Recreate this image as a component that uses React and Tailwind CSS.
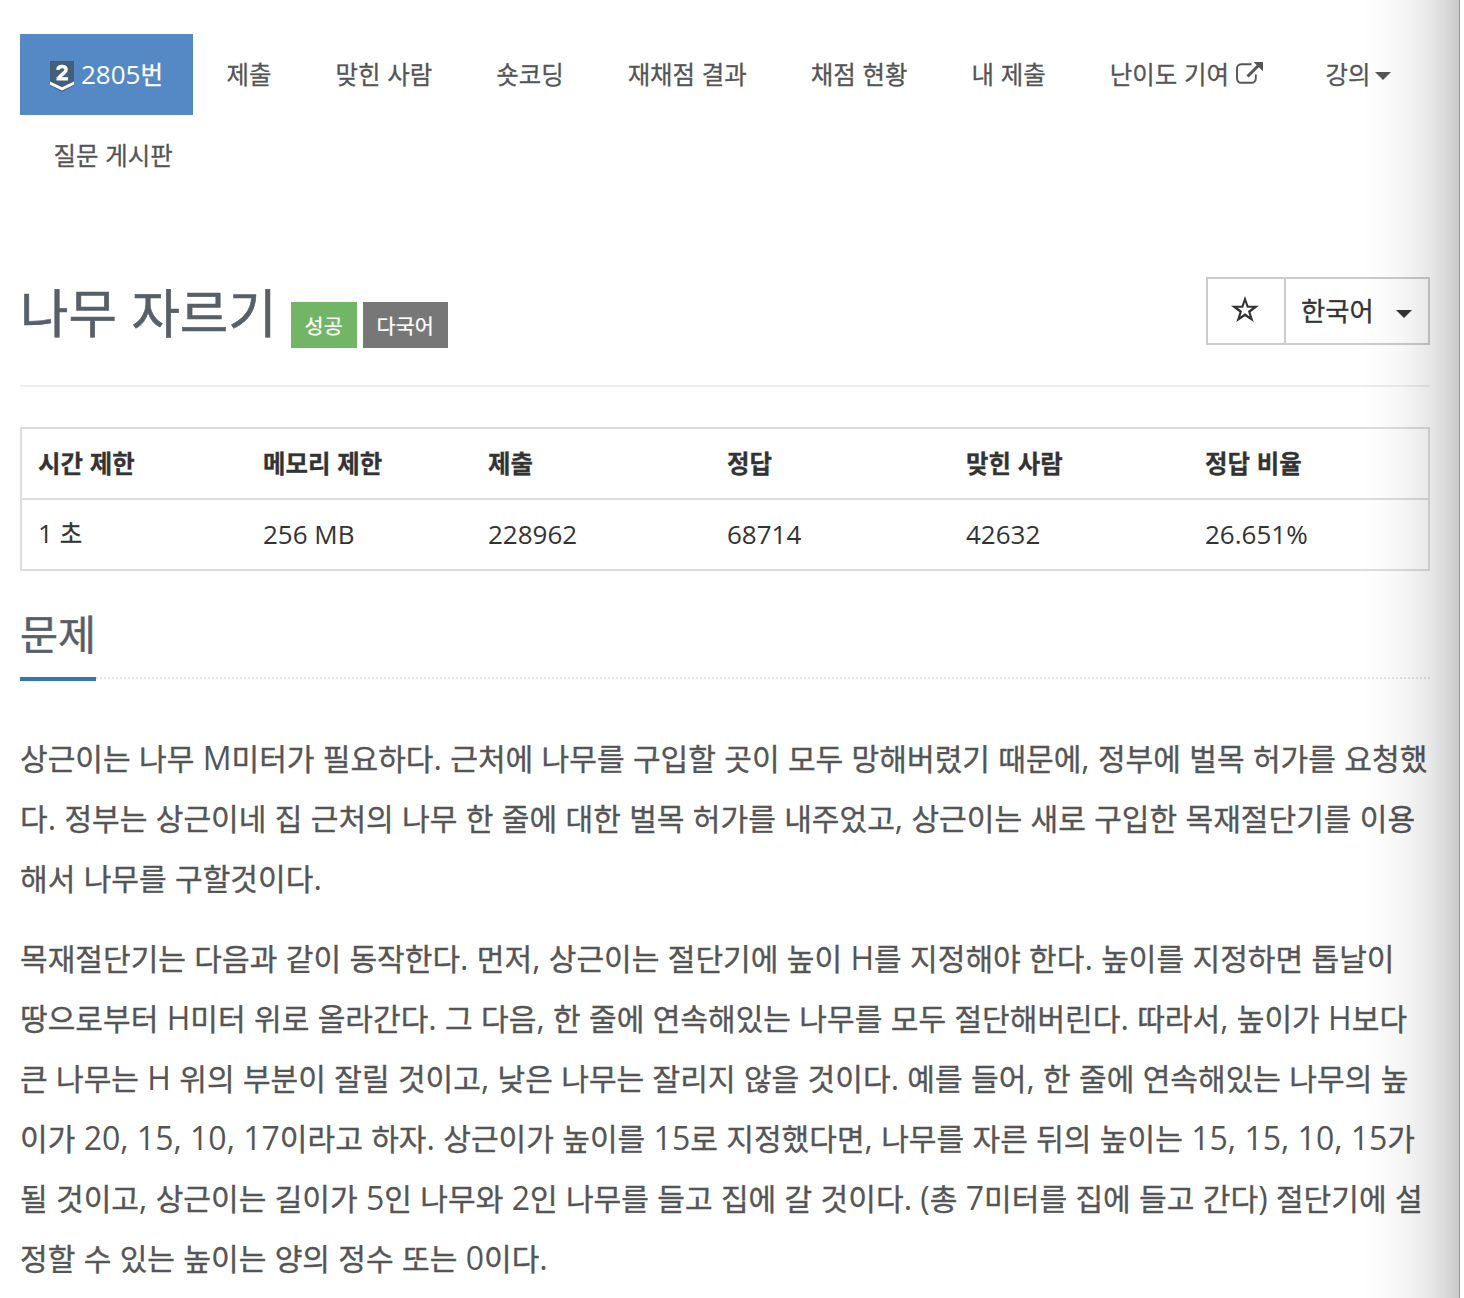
import React from 'react';

const tabs = ['제출', '맞힌 사람', '숏코딩', '재채점 결과', '채점 현황', '내 제출'];

const stats = [
  { label: '시간 제한', value: '1 초' },
  { label: '메모리 제한', value: '256 MB' },
  { label: '제출', value: '228962' },
  { label: '정답', value: '68714' },
  { label: '맞힌 사람', value: '42632' },
  { label: '정답 비율', value: '26.651%' },
];

const paragraphs = [
  [
    '상근이는 나무 M미터가 필요하다. 근처에 나무를 구입할 곳이 모두 망해버렸기 때문에, 정부에 벌목 허가를 요청했',
    '다. 정부는 상근이네 집 근처의 나무 한 줄에 대한 벌목 허가를 내주었고, 상근이는 새로 구입한 목재절단기를 이용',
    '해서 나무를 구할것이다.',
  ],
  [
    '목재절단기는 다음과 같이 동작한다. 먼저, 상근이는 절단기에 높이 H를 지정해야 한다. 높이를 지정하면 톱날이',
    '땅으로부터 H미터 위로 올라간다. 그 다음, 한 줄에 연속해있는 나무를 모두 절단해버린다. 따라서, 높이가 H보다',
    '큰 나무는 H 위의 부분이 잘릴 것이고, 낮은 나무는 잘리지 않을 것이다. 예를 들어, 한 줄에 연속해있는 나무의 높',
    '이가 20, 15, 10, 17이라고 하자. 상근이가 높이를 15로 지정했다면, 나무를 자른 뒤의 높이는 15, 15, 10, 15가',
    '될 것이고, 상근이는 길이가 5인 나무와 2인 나무를 들고 집에 갈 것이다. (총 7미터를 집에 들고 간다) 절단기에 설',
    '정할 수 있는 높이는 양의 정수 또는 0이다.',
  ],
];

// Hangul runs are set slightly smaller than the Latin around them
function Text({ children }) {
  return children.split(/([가-힣]+)/).map((part, i) =>
    i % 2 ? <span key={i} className="text-[0.94em] [-webkit-text-stroke:0.012em_currentColor]">{part}</span> : part
  );
}

function TierBadge() {
  return (
    <svg width="24" height="31" viewBox="0 0 24 31" className="mr-[7px] mt-[3px] shrink-0">
      <path d="M0 0h24v24.500l-12 6.500-12-6.500z" fill="#435f7a" />
      <path d="M0 20.500l12 5.700 12-5.700v3.200l-12 5.700-12-5.700z" fill="#fff" />
      <path d="M7.800 8.800C8 6.600 9.600 5.500 12 5.500c2.400 0 4.100 1.100 4.100 3.100 0 1.300-.7 2.200-2 3.300L8.300 17" fill="none" stroke="#fff" strokeWidth="3.400" />
      <path d="M6.500 16.200h11.500v3.300H6.500z" fill="#fff" />
    </svg>
  );
}

function Caret({ className }) {
  return (
    <svg width="16" height="8" viewBox="0 0 16 8" className={className}>
      <path d="M0 0h16L8 8z" fill="currentColor" />
    </svg>
  );
}

function ExternalIcon() {
  return (
    <svg width="27" height="24" viewBox="0 0 27 24" className="-mt-[3px] ml-[7px]" fill="none" stroke="currentColor">
      <path d="M15.500 3.200H5.200a4.200 4.200 0 0 0-4.200 4.200v10.200a4.200 4.200 0 0 0 4.200 4.200h10.400a4.200 4.200 0 0 0 4.200-4.200v-4" strokeWidth="1.900" />
      <path d="M11.500 15.500l11-11" strokeWidth="3" />
      <path d="M17.500 1H27v9.200z" fill="currentColor" stroke="none" />
    </svg>
  );
}

function Nav() {
  return (
    <nav className="flex flex-wrap text-[26px] leading-[80px] text-[#555] [&>a]:h-[81px] [&>a]:flex [&>a]:items-center">
      <a className="w-[173px] bg-[#5489c5] pl-[30px] text-white">
        <TierBadge />
        <span className="-mt-px"><Text>2805번</Text></span>
      </a>
      {tabs.map((tab) => (
        <a key={tab} className="pl-[33.5px] pr-[30.5px]">
          <span className="-mt-px"><Text>{tab}</Text></span>
        </a>
      ))}
      <a className="pl-[33.5px] pr-[30.5px]">
        <span className="-mt-px"><Text>난이도 기여</Text></span>
        <ExternalIcon />
      </a>
      <a className="pl-8 pr-[30px]">
        <span className="-mt-px"><Text>강의</Text></span>
        <Caret className="ml-[5px] mt-[3px]" />
      </a>
      <a className="pl-[33.5px] pr-[30.5px]">
        <span className="-mt-px"><Text>질문 게시판</Text></span>
      </a>
    </nav>
  );
}

function ProblemHeader() {
  return (
    <header className="mt-[81px] flex h-[110px] justify-between border-b-2 border-[#eee]">
      <div className="flex">
        <h1 className="text-[56px] leading-[68px] text-[#585f69]"><Text>나무 자르기</Text></h1>
        <span className="ml-[14px] mt-[25px] h-[46px] w-[66px] bg-[#72b566] text-center text-[22px] leading-[46px] text-white"><Text>성공</Text></span>
        <span className="ml-[6px] mt-[25px] h-[46px] w-[85px] bg-[#777] text-center text-[22px] leading-[46px] text-white"><Text>다국어</Text></span>
      </div>
      <div className="flex h-[68px] w-[224px] border-2 border-[#ccc] text-[#333]">
        <div className="flex w-[78px] items-center justify-center border-r-2 border-[#ccc]">
          <svg width="28" height="27" viewBox="0 0 28 27" className="mb-[3px] mr-[3px]">
            <path fillRule="evenodd" d="M14 0l3.400 9.700H28l-8.500 6.500 3.200 9.900L14 20.200l-8.700 5.900 3.200-9.900L0 9.700h10.600zM14 6.200l-1.900 5.500H6.600l4.400 3.400-1.600 5.300 4.600-3.200 4.600 3.200-1.600-5.300 4.400-3.400h-5.500z" fill="currentColor" />
          </svg>
        </div>
        <div className="flex flex-1 items-center pl-[15px] text-[28px]">
          <span className="-mt-[2px]"><Text>한국어</Text></span>
          <Caret className="ml-[22px] mt-[5px]" />
        </div>
      </div>
    </header>
  );
}

function StatsTable() {
  return (
    <table className="mt-[40px] w-full table-fixed border-collapse border-2 border-[#ddd] text-left text-[26px] text-[#333]">
      <colgroup>
        <col className="w-[226px]" />
        <col className="w-[225px]" />
        <col className="w-[239px]" />
        <col className="w-[239px]" />
        <col className="w-[239px]" />
        <col />
      </colgroup>
      <thead>
        <tr className="h-[71px] border-b-2 border-[#ddd]">
          {stats.map((s) => (
            <th key={s.label} className="py-0 pl-4 font-bold leading-[60px]"><Text>{s.label}</Text></th>
          ))}
        </tr>
      </thead>
      <tbody>
        <tr className="h-[71px]">
          {stats.map((s) => (
            <td key={s.label} className="pb-[2px] pl-4 pt-0 align-middle leading-[60px]"><Text>{s.value}</Text></td>
          ))}
        </tr>
      </tbody>
    </table>
  );
}

function App() {
  return (
    <div className="relative h-[1298px] w-[1464px] overflow-hidden bg-white font-['Open_Sans','Noto_Sans_CJK_KR',sans-serif]">
      <main className="ml-5 w-[1410px] pt-[34px]">
        <Nav />
        <ProblemHeader />
        <StatsTable />
        <section>
          <div className="mt-[34px] flex h-[76px] items-start">
            <h2 className="h-[76px] w-[76px] whitespace-nowrap border-b-4 border-[#3276b9] text-[44px] leading-[57px] text-[#585f69]"><Text>문제</Text></h2>
            <div className="h-[74px] flex-1 border-b-2 border-dotted border-[#e4e4ea]" />
          </div>
          <div className="mt-[47px] text-[32px] leading-[60px] text-[#555]">
            {paragraphs.map((lines, i) => (
              <p key={i} className="mb-5">
                {lines.map((line) => (
                  <span key={line} className="block h-[60px] whitespace-nowrap"><Text>{line}</Text></span>
                ))}
              </p>
            ))}
          </div>
        </section>
      </main>
      <div className="pointer-events-none absolute inset-y-0 right-1 w-[97px] border-r border-black/40 bg-[linear-gradient(to_right,rgba(0,0,0,0)_0%,rgba(0,0,0,0.015)_20%,rgba(0,0,0,0.04)_43%,rgba(0,0,0,0.09)_69%,rgba(0,0,0,0.14)_85%,rgba(0,0,0,0.21)_100%)]" />
    </div>
  );
}

export default App;
